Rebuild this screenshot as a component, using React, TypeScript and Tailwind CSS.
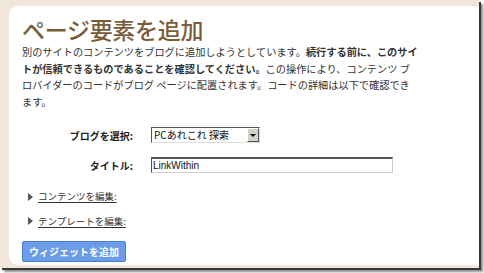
import React from 'react';

const jp = "font-['Noto_Sans_CJK_JP','Noto_Sans',sans-serif]";

function Disclosure({ label }: { label: string }) {
  return (
    <div className="flex items-center gap-[5px] pl-[6px]">
      <span className="block h-0 w-0 border-y-[4px] border-l-[5px] border-y-transparent border-l-[#555]" />
      <a href="#" className="text-[9.5px] leading-none text-[#333] underline underline-offset-2">
        {label}
      </a>
    </div>
  );
}

export default function App() {
  return (
    <div className={`h-[273px] w-[484px] bg-white ${jp}`}>
      <div className="flex h-[268px] w-[479px] flex-col bg-[#f0e7da] pt-[6px] pb-[3px] pl-[9px] shadow-[2px_2px_0_#3a3a3a,4px_4px_2px_#8a8a8a]">
        <div className="flex flex-1 flex-col rounded-l-[9px] bg-white pl-[13px] pt-[9px]">
          <h1 className="text-[23px] leading-[28px] font-medium tracking-[-0.3px] text-[#7b5c3a]">ページ要素を追加</h1>
          <p className="mt-[1px] text-[10.2px] leading-[16.5px] text-[#333] whitespace-nowrap">
            別のサイトのコンテンツをブログに追加しようとしています。<b>続行する前に、このサイ</b>
            <br />
            <b>トが信頼できるものであることを確認してください。</b>この操作により、コンテンツ ブ
            <br />
            ロバイダーのコードがブログ ページに配置されます。コードの詳細は以下で確認でき
            <br />
            ます。
          </p>

          <div className="mt-[17px] flex items-center">
            <span className="w-[112px] pr-[1px] text-right text-[10px] font-bold text-[#222]">ブログを選択:</span>
            <div className="ml-[17px] flex h-[16px] w-[109px] border border-t-[#555] border-l-[#555] border-r-[#ddd] border-b-[#ddd] bg-white">
              <span className="flex-1 pl-[2px] text-[10px] leading-[14px] text-[#111]">PCあれこれ 探索</span>
              <span className="flex w-[12px] items-center justify-center border border-t-[#fff] border-l-[#fff] border-r-[#555] border-b-[#555] bg-[#d4d0c8]">
                <span className="block h-0 w-0 border-x-[3px] border-t-[3px] border-x-transparent border-t-black" />
              </span>
            </div>
          </div>

          <div className="mt-[14px] flex items-center">
            <span className="w-[112px] pr-[1px] text-right text-[10px] font-bold text-[#222]">タイトル:</span>
            <div className="ml-[17px] flex h-[16px] w-[242px] items-center border border-t-[2px] border-t-[#555] border-l-[#555] border-r-[#ccc] border-b-[#ccc] bg-white pl-[1px] text-[10px] font-['Liberation_Sans',sans-serif] text-[#111]">
              LinkWithin
            </div>
          </div>

          <div className="mt-[19px]">
            <Disclosure label="コンテンツを編集:" />
          </div>
          <div className="mt-[15px]">
            <Disclosure label="テンプレートを編集:" />
          </div>

          <div className="mt-[11px]">
            <button className="h-[21px] w-[104px] rounded-[2px] border border-[#4a7fd8] bg-[#6a9ce8] text-[10px] font-bold text-white">
              ウィジェットを追加
            </button>
          </div>
        </div>
      </div>
    </div>
  );
}
